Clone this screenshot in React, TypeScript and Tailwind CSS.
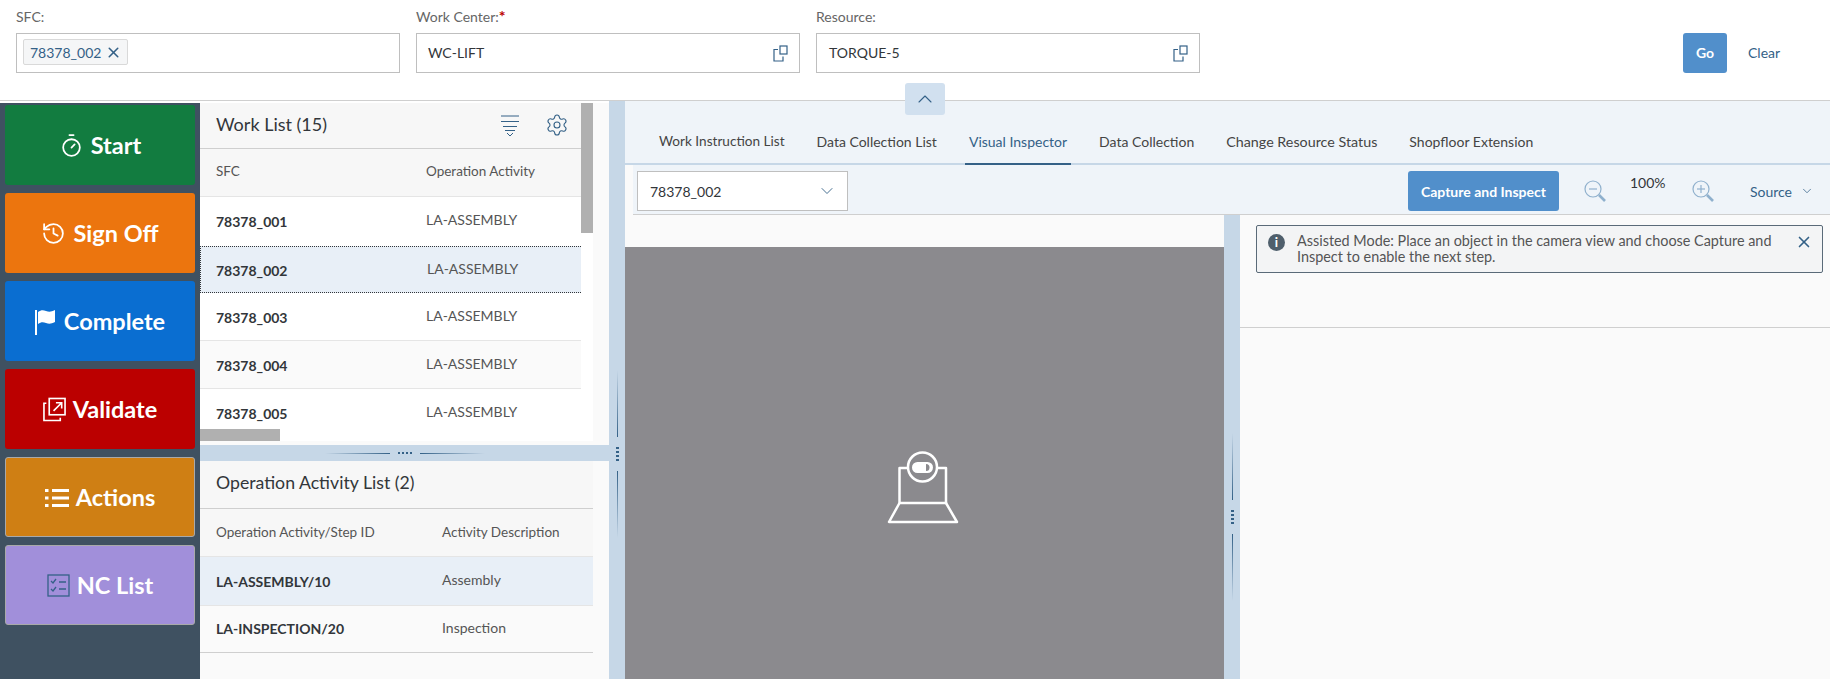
import { ChevronDown, ChevronUp, History, Settings, Timer, X } from "lucide-react";
import type { ReactNode } from "react";

const FlagIcon = () => (
  <svg width="22" height="26" viewBox="0 0 22 26" fill="white">
    <rect x="0" y="1" width="2" height="25" />
    <path d="M3 3c3-2 5-2 8-1s5 1 9-1v12c-4 2-6 2-9 1s-5-1-8 1z" />
  </svg>
);

const ValidateIcon = () => (
  <svg width="23" height="25" viewBox="0 0 24 25" fill="none" stroke="white" strokeWidth="1.7">
    <rect x="6.500" y="1" width="16.500" height="17" />
    <path d="M11 14l8-8M13.500 5.500H19.500V11.500" />
    <path d="M3.500 6H1v18h17v-3" />
  </svg>
);

const ActionsIcon = () => (
  <svg width="24" height="20" viewBox="0 0 24 20" fill="white">
    <rect x="0" y="1" width="3.500" height="3" />
    <rect x="0" y="8.500" width="3.500" height="3" />
    <rect x="0" y="16" width="3.500" height="3" />
    <rect x="7" y="1" width="17" height="3" />
    <rect x="7" y="8.500" width="17" height="3" />
    <rect x="7" y="16" width="17" height="3" />
  </svg>
);

const NcIcon = () => (
  <svg width="23" height="23" viewBox="0 0 23 23" fill="none" stroke="#346187" strokeWidth="1.300">
    <rect x="1" y="1" width="21" height="21" />
    <path d="M4 7l2 2 3-4M4 15l2 2 3-4M12 8h7M12 15h7" />
  </svg>
);

const CopyIcon = () => (
  <svg width="15" height="17" viewBox="0 0 15 17" fill="none" stroke="#346187" strokeWidth="1.200">
    <rect x="7" y="1" width="7" height="8" />
    <path d="M5 4.500H1v11.500h9v-4.500" />
  </svg>
);

const SortIcon = () => (
  <svg width="18" height="22" viewBox="0 0 18 22" fill="none" stroke="#346187" strokeWidth="1">
    <path d="M0 1h18M0 6.500h18M2 11.500h14M4 15.500h10M6 18l3 3 3-3" />
  </svg>
);

const ZoomIcon = ({ plus }: { plus?: boolean }) => (
  <svg width="22" height="22" viewBox="0 0 22 22" fill="none" stroke="#8fb0cd" strokeWidth="1.200">
    <circle cx="9" cy="9" r="8" />
    <path d="M5 9h8" />
    {plus && <path d="M9 5v8" />}
    <path d="M15 15l6 6" strokeWidth="2.600" />
  </svg>
);

const CameraIcon = () => (
  <svg width="72" height="73" viewBox="0 0 72 73" fill="none" stroke="white" strokeWidth="2.500" strokeLinejoin="round">
    <path d="M21 17H12.500V52H59V17H50" />
    <path d="M12.500 52L2 71H70L59 52" />
    <circle cx="35.500" cy="16" r="14.500" />
    <rect x="25" y="11" width="21" height="11" rx="5.500" fill="white" stroke="none" />
    <path d="M39 13a3.500 3.500 0 0 1 0 7z" fill="#8b8a8e" stroke="none" />
  </svg>
);

const actions: { label: string; icon: ReactNode; color: string }[] = [
  { label: "Start", icon: <Timer size={25} strokeWidth={1.7} />, color: "bg-[#127c40]" },
  { label: "Sign Off", icon: <History size={25} strokeWidth={1.7} />, color: "bg-[#ec750e]" },
  { label: "Complete", icon: <FlagIcon />, color: "bg-[#0a6ed1]" },
  { label: "Validate", icon: <ValidateIcon />, color: "bg-[#bb0000]" },
  { label: "Actions", icon: <ActionsIcon />, color: "bg-[#cf7f14] border border-[#a9a9a9]" },
  { label: "NC List", icon: <NcIcon />, color: "bg-[#a18fda] border border-[#a9a9a9]" },
];

const Field = ({ label, required, children }: { label: string; required?: boolean; children: ReactNode }) => (
  <div className="w-[384px]">
    <div className="h-[33px] pt-2 text-[14px] leading-[18px] text-[#666]">
      {label}
      {required && <span className="text-[#bb0000] text-[16px] leading-[16px] font-bold">*</span>}
    </div>
    <div className="h-10 border border-[#bfbfbf] bg-white flex items-center justify-between pl-[11px] pr-[11px] text-[14px] text-[#32363a]">
      {children}
    </div>
  </div>
);

const Splitter = ({ top }: { top: string }) => (
  <div className={`w-4 shrink-0 bg-[#c6d7e7] flex flex-col items-center ${top}`}>
    <div className="w-px h-[67px] bg-gradient-to-b from-transparent to-[#346187]" />
    <div className="mt-[10px] flex flex-col gap-[2px]">
      <div className="w-[3px] h-[2px] bg-[#346187]" />
      <div className="w-[3px] h-[2px] bg-[#346187]" />
      <div className="w-[3px] h-[2px] bg-[#346187]" />
      <div className="w-[3px] h-[2px] bg-[#346187]" />
    </div>
    <div className="mt-[10px] w-px h-[67px] bg-gradient-to-b from-[#346187] to-transparent" />
  </div>
);

const workRows = ["78378_001", "78378_002", "78378_003", "78378_004", "78378_005"];
const tabs = [
  { label: "Work Instruction List", size: "text-[13.600px]" },
  { label: "Data Collection List", size: "text-[14px]" },
  { label: "Visual Inspector", size: "text-[14px]" },
  { label: "Data Collection", size: "text-[14px]" },
  { label: "Change Resource Status", size: "text-[14.300px]" },
  { label: "Shopfloor Extension", size: "text-[14px]" },
];

export default function App() {
  return (
    <div className="relative h-[679px] w-[1830px] overflow-hidden bg-white font-['Lato','Noto_Sans',sans-serif] text-[#32363a]">
      {/* filter bar */}
      <header className="h-[101px] border-b border-[#cfcfcf] flex pl-4 gap-4">
        <Field label="SFC:">
          <span className="-ml-[5px] h-[26px] w-[105px] -mt-[2px] bg-[#f5f6f7] border border-[#d9d9d9] rounded-[2px] flex items-center justify-between pl-[6px] pr-[5px] text-[#346187]">
            78378_002
            <X size={17} strokeWidth={2.200} />
          </span>
        </Field>
        <Field label="Work Center:" required>
          <span className="pb-[1px]">WC-LIFT</span>
          <CopyIcon />
        </Field>
        <Field label="Resource:">
          <span className="ml-[1px] pb-[1px]">TORQUE-5</span>
          <CopyIcon />
        </Field>
        <div className="ml-[467px] mt-[33px] h-10 flex items-center">
          <button className="w-[44px] h-10 pb-[1px] rounded-[3px] bg-[#518fcb] text-white text-[14px] font-bold">Go</button>
          <span className="ml-[21px] pb-[1px] text-[14px] text-[#346187]">Clear</span>
        </div>
      </header>

      <button className="absolute left-[905px] top-[83px] w-10 h-8 rounded-[3px] bg-[#d1e0ef] flex items-center justify-center text-[#346187]">
        <ChevronUp size={24} strokeWidth={1.100} />
      </button>

      <div className="flex h-[578px]">
        {/* action buttons */}
        <aside className="w-[200px] shrink-0 mt-[2px] bg-[#3f5161] pt-[2px] px-[5px] flex flex-col gap-2">
          {actions.map((a) => (
            <button key={a.label} className={`h-20 shrink-0 rounded-[3px] flex items-center justify-center gap-[7px] pt-[1px] text-white text-[23.500px] font-bold ${a.color}`}>
              {a.icon}
              {a.label}
            </button>
          ))}
        </aside>

        {/* lists */}
        <section className="w-[409px] shrink-0 mt-[2px] flex flex-col bg-[#fafafa]">
          <div className="relative h-[342px] shrink-0 overflow-hidden">
            <div className="w-[393px] h-[338px] bg-white">
              <div className="w-[381px]">
                <div className="h-[46px] pb-[2px] bg-[#f7f7f7] border-b border-[#cfcfcf] flex items-center pl-4 text-[18px]">
                  Work List (15)
                  <span className="ml-auto mr-[26px] pt-[2px]"><SortIcon /></span>
                  <Settings className="mr-[12px] text-[#346187]" size={24} strokeWidth={1.100} />
                </div>
                <div className="h-[48px] pb-[2px] bg-[#f7f7f7] border-b border-[#e5e5e5] flex items-center text-[13.500px] text-[#555]">
                  <span className="w-[226px] pl-4">SFC</span>
                  <span>Operation Activity</span>
                </div>
                {workRows.map((sfc, i) => (
                  <div
                    key={sfc}
                    className={`flex items-center text-[14px] ${
                      i === 0
                        ? "h-[49px] bg-white border-b border-transparent"
                        : i === 1
                          ? "h-[47px] bg-[#e8eff7] border border-r-0 border-dotted border-[#32363a]"
                          : i === 3
                            ? "h-[48px] bg-[#fafafa] border-b border-[#e5e5e5]"
                            : i === 4
                              ? "h-[48px] bg-white"
                              : "h-[48px] bg-white border-b border-[#e5e5e5]"
                    }`}
                  >
                    <span className={`w-[226px] pt-[1px] font-bold ${i === 1 ? "pl-[15px]" : "pl-4"}`}>{sfc}</span>
                    <span className="pb-[3px] text-[#555]">LA-ASSEMBLY</span>
                  </div>
                ))}
              </div>
            </div>
            <div className="absolute left-[381px] top-0 w-3 h-[130px] bg-[#b0b0b0]" />
            <div className="absolute left-0 top-[326px] w-20 h-3 bg-[#b0b0b0]" />
          </div>

          <div className="h-4 shrink-0 bg-[#c6d7e7] flex items-center justify-center gap-2">
            <div className="w-[65px] h-px bg-gradient-to-r from-transparent to-[#346187]" />
            <div className="flex gap-[2px]">
              <div className="w-[2px] h-[2px] bg-[#346187]" />
              <div className="w-[2px] h-[2px] bg-[#346187]" />
              <div className="w-[2px] h-[2px] bg-[#346187]" />
              <div className="w-[2px] h-[2px] bg-[#346187]" />
            </div>
            <div className="w-[65px] h-px bg-gradient-to-r from-[#346187] to-transparent" />
          </div>

          <div className="w-[393px] flex-1">
            <div className="h-[48px] pb-[2px] bg-[#f7f7f7] border-b border-[#cfcfcf] flex items-center pl-4 text-[17.700px]">
              Operation Activity List (2)
            </div>
            <div className="h-[48px] bg-[#f7f7f7] border-b border-[#e5e5e5] flex items-center text-[13.500px] text-[#555]">
              <span className="w-[242px] pl-4">Operation Activity/Step ID</span>
              <span>Activity Description</span>
            </div>
            <div className="h-[49px] bg-[#e8eff7] border-b border-[#e5e5e5] flex items-center text-[14px]">
              <span className="w-[242px] pl-4 font-bold">LA-ASSEMBLY/10</span>
              <span className="pb-1 text-[#555]">Assembly</span>
            </div>
            <div className="h-[47px] border-b border-[#cfcfcf] flex items-center text-[14px]">
              <span className="w-[242px] pl-4 pb-[1px] font-bold">LA-INSPECTION/20</span>
              <span className="pb-1 text-[#555]">Inspection</span>
            </div>
          </div>
        </section>

        <Splitter top="pt-[269px]" />

        {/* plugin area */}
        <main className="flex-1 min-w-0 flex flex-col bg-[#fafafa]">
          <nav className="h-[64px] shrink-0 bg-[#eff4f9] border-b-2 border-[#c6d7e7] flex items-end pl-[34px] gap-[32px] text-[#444]">
            {tabs.map((t) => (
              <span
                key={t.label}
                className={`h-[42px] -mb-[2px] pt-2 ${t.size} ${
                  t.label === "Visual Inspector" ? "border-b-2 border-[#346187] text-[#346187] -mx-1 px-1" : ""
                }`}
              >
                {t.label}
              </span>
            ))}
          </nav>
          <div className="h-[50px] shrink-0 bg-[#eff4f9] ml-[8px] border-b border-[#cfcfcf] flex items-center pl-[4px] pt-[3px] text-[14px]">
            <div className="w-[211px] h-10 bg-white border border-[#bfbfbf] flex items-center justify-between pl-3 pr-[10px] text-[#32363a]">
              78378_002
              <ChevronDown size={20} strokeWidth={1.100} className="text-[#346187]" />
            </div>
            <button className="ml-auto w-[151px] h-10 rounded-[3px] bg-[#518fcb] text-white font-bold">Capture and Inspect</button>
            <span className="ml-[25px]"><ZoomIcon /></span>
            <span className="ml-[24px] w-[36px] pb-[18px] text-[#32363a]">100%</span>
            <span className="ml-[26px]"><ZoomIcon plus /></span>
            <span className="ml-[36px] text-[#346187]">Source</span>
            <ChevronDown size={14} strokeWidth={1.300} className="ml-[8px] mr-4 text-[#346187]" />
          </div>
          <div className="flex-1 min-h-0 flex">
            <div className="w-[599px] shrink-0 pt-[32px]">
              <div className="h-full bg-[#8b8a8e] flex justify-center pt-[204px]">
                <div className="h-[73px] -ml-[3px]"><CameraIcon /></div>
              </div>
            </div>
            <Splitter top="pt-[218px]" />
            <div className="flex-1 min-w-0">
              <div className="h-[113px] border-b border-[#cfcfcf] pt-[10px] pl-4 pr-[7px]">
                <div className="h-[48px] rounded-[2px] border border-[#5a6a78] bg-[#f3f4f5] flex pl-[11px] pr-[9px] pt-[7px] text-[14.400px] leading-[16px] text-[#555]">
                  <span className="mt-[1px] w-[17px] h-[17px] shrink-0 rounded-full bg-[#4f5f6c] text-white text-[13px] leading-[17px] text-center font-bold">i</span>
                  <span className="ml-[12px] flex-1">Assisted Mode: Place an object in the camera view and choose Capture and Inspect to enable the next step.</span>
                  <X size={18} strokeWidth={2.200} className="ml-[20px] text-[#346187] shrink-0" />
                </div>
              </div>
            </div>
          </div>
        </main>
      </div>
    </div>
  );
}
